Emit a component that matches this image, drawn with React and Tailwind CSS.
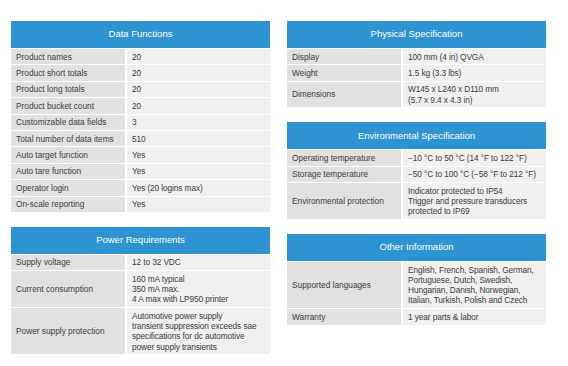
import React from 'react'

const tables = {
    left: [
        {
            title: 'Data Functions',
            rows: [
                ['Product names', '20'],
                ['Product short totals', '20'],
                ['Product long totals', '20'],
                ['Product bucket count', '20'],
                ['Customizable data fields', '3'],
                ['Total number of data items', '510'],
                ['Auto target function', 'Yes'],
                ['Auto tare function', 'Yes'],
                ['Operator login', 'Yes (20 logins max)'],
                ['On-scale reporting', 'Yes'],
            ],
        },
        {
            title: 'Power Requirements',
            rows: [
                ['Supply voltage', '12 to 32 VDC'],
                ['Current consumption', ['160 mA typical', '350 mA max.', '4 A max with LP950 printer']],
                ['Power supply protection', ['Automotive power supply', 'transient suppression exceeds sae', 'specifications for dc automotive', 'power supply transients']],
            ],
        },
    ],
    right: [
        {
            title: 'Physical Specification',
            rows: [
                ['Display', '100 mm (4 in) QVGA'],
                ['Weight', '1.5 kg (3.3 lbs)'],
                ['Dimensions', ['W145 x L240 x D110 mm', '(5.7 x 9.4 x 4.3 in)']],
            ],
        },
        {
            title: 'Environmental Specification',
            rows: [
                ['Operating temperature', '\u221210 \u00b0C to 50 \u00b0C (14 \u00b0F to 122 \u00b0F)'],
                ['Storage temperature', '\u221250 \u00b0C to 100 \u00b0C (\u221258 \u00b0F to 212 \u00b0F)'],
                ['Environmental protection', ['Indicator protected to IP54', 'Trigger and pressure transducers', 'protected to IP69']],
            ],
        },
        {
            title: 'Other Information',
            rows: [
                ['Supported languages', ['English, French, Spanish, German,', 'Portuguese, Dutch, Swedish,', 'Hungarian, Danish, Norwegian,', 'Italian, Turkish, Polish and Czech']],
                ['Warranty', '1 year parts & labor'],
            ],
        },
    ],
}

const SpecTable = ({ title, rows }) => (
    <div className='w-[259px]'>
        <div className='h-[27px] flex items-center justify-center bg-[#2e93d1] text-white text-[9.5px]'>{title}</div>
        {rows.map(([label, value]) => (
            <div key={label} className='grid grid-cols-[114px_1fr] gap-x-[2px] mt-[1px]'>
                <div className='bg-[#e1e1e1] px-[5px] py-[2.5px] min-h-[15.4px] flex items-center whitespace-nowrap'>{label}</div>
                <div className='bg-[#f0f0f0] px-[5px] py-[2.5px] min-h-[15.4px] flex flex-col justify-center whitespace-nowrap tracking-[-0.1px]'>
                    {Array.isArray(value) ? value.map((line) => <span key={line}>{line}</span>) : <span>{value}</span>}
                </div>
            </div>
        ))}
    </div>
)

export default function App() {
    return (
        <div className='w-[568px] h-[366px] bg-white flex gap-[17px] pl-[11px] pt-[21px] text-[#3b3b3b] text-[8.3px] leading-[10.3px]' style={{ fontFamily: '"Liberation Sans", Arial, sans-serif' }}>
            <div className='flex flex-col gap-[15px]'>
                {tables.left.map((t) => <SpecTable key={t.title} {...t} />)}
            </div>
            <div className='flex flex-col gap-[15px]'>
                {tables.right.map((t) => <SpecTable key={t.title} {...t} />)}
            </div>
        </div>
    )
}
